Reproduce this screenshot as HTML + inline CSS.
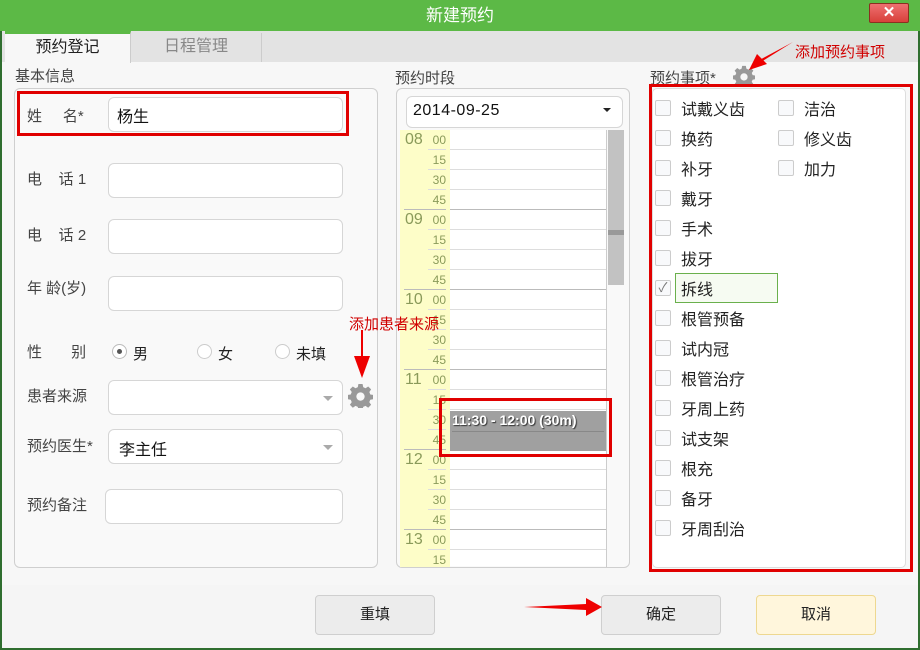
<!DOCTYPE html>
<html><head><meta charset="utf-8"><style>
*{margin:0;padding:0;box-sizing:border-box}
body{width:920px;height:650px;overflow:hidden;font-family:"Liberation Sans","Noto Sans CJK SC",sans-serif;font-size:15px;color:#333;background:#2f6e2f;position:relative}
.a{position:absolute}
.win{left:2px;top:0;width:916px;height:648px;background:#f7f7f7}
.title{left:0;top:0;width:920px;height:31px;background:#5cb946;color:#fff;font-size:17px;text-align:center;line-height:31px}
.inp{background:#fff;border:1px solid #d6d6d6;border-radius:6px}
.lbl{font-size:15px;color:#444;white-space:nowrap}
.panel{border:1px solid #cfcfcf;border-radius:6px;background:#f9f9f9}
.red{border:3px solid #e00000}
.cb{width:16px;height:16px;border:1px solid #ccc;border-radius:2px;background:#f8f9fb;margin-right:10px;text-align:center;line-height:14px;font-size:13px;color:#777}
.it{display:flex;align-items:center;height:30px}
.btn{border:1px solid #cfcfcf;border-radius:4px;background:#ececec;text-align:center;line-height:38px;font-size:15px;color:#222}
.row{left:450px;width:156px;height:20px;border-bottom:1px solid #ddd;background:#fff}
.mn{left:428px;width:18px;height:20px;border-bottom:1px solid #ddd;font-size:12px;color:#8a9a5a;text-align:right;line-height:20px}
.hr{left:405px;font-size:16px;color:#8a9a5a}
.ann{color:#d00000;font-size:15px;white-space:nowrap}
</style></head><body>
<div class="a win"></div>
<div class="a title">新建预约</div>
<div class="a" style="left:869px;top:3px;width:40px;height:20px;background:linear-gradient(#ee7070,#d8403a);border:1px solid #8a3020;border-radius:2px;color:#fff;font-weight:bold;text-align:center;line-height:18px;font-size:15px">✕</div>
<div class="a" style="left:2px;top:31px;width:916px;height:31px;background:#e3e3e3"></div>
<div class="a" style="left:5px;top:31px;width:126px;height:32px;background:#f7f7f7;border-top:3px solid #5cb946;border-right:1px solid #ccc;font-size:16px;text-align:center;line-height:28px;color:#222">预约登记</div>
<div class="a" style="left:131px;top:33px;width:131px;height:29px;border-right:1px solid #ccc;font-size:16px;text-align:center;line-height:28px;color:#888">日程管理</div>
<div class="a lbl" style="left:15px;top:65px">基本信息</div>
<div class="a panel" style="left:14px;top:88px;width:364px;height:480px"></div>
<div class="a red" style="left:17px;top:91px;width:332px;height:45px"></div>
<div class="a lbl" style="left:27px;top:105px">姓&nbsp;&nbsp;&nbsp;&nbsp;&nbsp;名*</div>
<div class="a inp" style="left:108px;top:97px;width:235px;height:35px;padding:5px 8px;font-size:16px;color:#111">杨生</div>
<div class="a lbl" style="left:27px;top:168px">电&nbsp;&nbsp;&nbsp;&nbsp;话 1</div>
<div class="a inp" style="left:108px;top:163px;width:235px;height:35px"></div>
<div class="a lbl" style="left:27px;top:224px">电&nbsp;&nbsp;&nbsp;&nbsp;话 2</div>
<div class="a inp" style="left:108px;top:219px;width:235px;height:35px"></div>
<div class="a lbl" style="left:27px;top:277px">年 龄(岁)</div>
<div class="a inp" style="left:108px;top:276px;width:235px;height:35px"></div>
<div class="a lbl" style="left:27px;top:341px">性&nbsp;&nbsp;&nbsp;&nbsp;&nbsp;&nbsp;&nbsp;别</div>
<div class="a" style="left:112px;top:344px;width:15px;height:15px;border:1px solid #bbb;border-radius:50%;background:#fff"><div style="margin:4px;width:5px;height:5px;border-radius:50%;background:#555"></div></div>
<div class="a lbl" style="left:133px;top:343px;color:#222">男</div>
<div class="a" style="left:197px;top:344px;width:15px;height:15px;border:1px solid #ccc;border-radius:50%;background:#fff"></div>
<div class="a lbl" style="left:218px;top:343px;color:#222">女</div>
<div class="a" style="left:275px;top:344px;width:15px;height:15px;border:1px solid #ccc;border-radius:50%;background:#fff"></div>
<div class="a lbl" style="left:296px;top:343px;color:#222">未填</div>
<div class="a lbl" style="left:27px;top:385px">患者来源</div>
<div class="a inp" style="left:108px;top:380px;width:235px;height:35px"></div>
<div class="a" style="left:323px;top:396px;border:5px solid transparent;border-top:5px solid #aaa"></div>
<svg class="a" style="left:348px;top:383px" width="25" height="25" viewBox="0 0 24 24"><path fill="#999" d="M10 1h4l.6 3 2.2 1 2.6-1.7 2.8 2.8L20.5 8.7l.9 2.3 3 .5v4l-3 .6-1 2.2 1.8 2.6-2.8 2.8-2.6-1.8-2.2 1-.6 3h-4l-.6-3-2.2-1-2.6 1.8-2.8-2.8 1.8-2.6-1-2.2-3-.6v-4l3-.5 1-2.3L1.800 6.100 4.600 3.300 7.200 5 9.400 4z"/><circle cx="12" cy="13" r="4" fill="#f9f9f9"/></svg>
<div class="a lbl" style="left:27px;top:435px">预约医生*</div>
<div class="a inp" style="left:108px;top:429px;width:235px;height:35px;padding:6px 10px;font-size:16px;color:#111">李主任</div>
<div class="a" style="left:323px;top:445px;border:5px solid transparent;border-top:5px solid #aaa"></div>
<div class="a lbl" style="left:27px;top:494px">预约备注</div>
<div class="a inp" style="left:105px;top:489px;width:238px;height:35px"></div>
<div class="a ann" style="left:349px;top:313px;z-index:5">添加患者来源</div>
<svg class="a" style="left:350px;top:330px" width="24" height="50"><path d="M11 0h2v28h-2z" fill="#e00"/><path d="M4 26h16l-8 22z" fill="#e00"/></svg>
<div class="a lbl" style="left:395px;top:67px">预约时段</div>
<div class="a panel" style="left:396px;top:88px;width:234px;height:480px"></div>
<div class="a inp" style="left:406px;top:96px;width:217px;height:32px;padding:5px 6px;font-size:16px;color:#111;letter-spacing:0.5px">2014-09-25</div>
<div class="a" style="left:603px;top:108px;border:4px solid transparent;border-top:4px solid #222"></div>
<div class="a" style="left:400px;top:130px;width:50px;height:437px;background:#fdfdc8"></div>
<div class="a" style="left:606px;top:130px;width:1px;height:437px;background:#ccc"></div>
<div class="a" style="left:608px;top:130px;width:16px;height:155px;background:#c2c2c2"></div>
<div class="a" style="left:608px;top:230px;width:16px;height:5px;background:#999"></div>
<div class="a row" style="top:130px"></div><div class="a mn" style="top:130px">00</div><div class="a hr" style="top:131px">08</div>
<div class="a row" style="top:150px"></div><div class="a mn" style="top:150px">15</div>
<div class="a row" style="top:170px"></div><div class="a mn" style="top:170px">30</div>
<div class="a row" style="top:190px;border-color:#bbb"></div><div class="a mn" style="top:190px;left:404px;width:42px;border-color:#bbb">45</div>
<div class="a row" style="top:210px"></div><div class="a mn" style="top:210px">00</div><div class="a hr" style="top:211px">09</div>
<div class="a row" style="top:230px"></div><div class="a mn" style="top:230px">15</div>
<div class="a row" style="top:250px"></div><div class="a mn" style="top:250px">30</div>
<div class="a row" style="top:270px;border-color:#bbb"></div><div class="a mn" style="top:270px;left:404px;width:42px;border-color:#bbb">45</div>
<div class="a row" style="top:290px"></div><div class="a mn" style="top:290px">00</div><div class="a hr" style="top:291px">10</div>
<div class="a row" style="top:310px"></div><div class="a mn" style="top:310px">15</div>
<div class="a row" style="top:330px"></div><div class="a mn" style="top:330px">30</div>
<div class="a row" style="top:350px;border-color:#bbb"></div><div class="a mn" style="top:350px;left:404px;width:42px;border-color:#bbb">45</div>
<div class="a row" style="top:370px"></div><div class="a mn" style="top:370px">00</div><div class="a hr" style="top:371px">11</div>
<div class="a row" style="top:390px"></div><div class="a mn" style="top:390px">15</div>
<div class="a row" style="top:410px"></div><div class="a mn" style="top:410px">30</div>
<div class="a row" style="top:430px;border-color:#bbb"></div><div class="a mn" style="top:430px;left:404px;width:42px;border-color:#bbb">45</div>
<div class="a row" style="top:450px"></div><div class="a mn" style="top:450px">00</div><div class="a hr" style="top:451px">12</div>
<div class="a row" style="top:470px"></div><div class="a mn" style="top:470px">15</div>
<div class="a row" style="top:490px"></div><div class="a mn" style="top:490px">30</div>
<div class="a row" style="top:510px;border-color:#bbb"></div><div class="a mn" style="top:510px;left:404px;width:42px;border-color:#bbb">45</div>
<div class="a row" style="top:530px"></div><div class="a mn" style="top:530px">00</div><div class="a hr" style="top:531px">13</div>
<div class="a row" style="top:550px;height:16px;border:none"></div><div class="a mn" style="top:550px;height:16px;border:none;overflow:hidden">15</div>
<div class="a" style="left:450px;top:411px;width:156px;height:40px;background:#a0a0a0;color:#fff;font-weight:bold;font-size:14px;padding:1px 2px;text-shadow:1px 1px 1px #333"><div style="border-bottom:1px solid #888;height:20px">11:30 - 12:00 (30m)</div></div>
<div class="a red" style="left:439px;top:398px;width:173px;height:59px"></div>
<div class="a lbl" style="left:650px;top:67px">预约事项*</div>
<svg class="a" style="left:733px;top:65px" width="22" height="22" viewBox="0 0 24 24"><path fill="#999" d="M10 1h4l.6 3 2.2 1 2.6-1.7 2.8 2.8L20.5 8.7l.9 2.3 3 .5v4l-3 .6-1 2.2 1.8 2.6-2.8 2.8-2.6-1.8-2.2 1-.6 3h-4l-.6-3-2.2-1-2.6 1.8-2.8-2.8 1.8-2.6-1-2.2-3-.6v-4l3-.5 1-2.3L1.800 6.100 4.600 3.300 7.200 5 9.400 4z"/><circle cx="12" cy="13" r="4" fill="#f7f7f7"/></svg>
<div class="a ann" style="left:795px;top:41px">添加预约事项</div>
<svg class="a" style="left:745px;top:38px" width="50" height="36"><path d="M48 4L16 24l-1.5-2z" fill="#e00"/><path d="M4 32l8-16 10 10z" fill="#e00"/></svg>
<div class="a" style="left:652px;top:88px;width:254px;height:480px;background:#fff;border:1px solid #ddd;border-radius:5px"></div>
<div class="a red" style="left:649px;top:84px;width:264px;height:488px"></div>
<div class="a" style="left:675px;top:273px;width:103px;height:30px;border:1px solid #6ab04c;background:#f6fbf2"></div>
<div class="a" style="left:655px;top:93px;font-size:16px;color:#222">
<div class="it"><span class="cb"></span>试戴义齿</div>
<div class="it"><span class="cb"></span>换药</div>
<div class="it"><span class="cb"></span>补牙</div>
<div class="it"><span class="cb"></span>戴牙</div>
<div class="it"><span class="cb"></span>手术</div>
<div class="it"><span class="cb"></span>拔牙</div>
<div class="it"><span class="cb">✓</span>拆线</div>
<div class="it"><span class="cb"></span>根管预备</div>
<div class="it"><span class="cb"></span>试内冠</div>
<div class="it"><span class="cb"></span>根管治疗</div>
<div class="it"><span class="cb"></span>牙周上药</div>
<div class="it"><span class="cb"></span>试支架</div>
<div class="it"><span class="cb"></span>根充</div>
<div class="it"><span class="cb"></span>备牙</div>
<div class="it"><span class="cb"></span>牙周刮治</div>
</div>
<div class="a" style="left:778px;top:93px;font-size:16px;color:#222">
<div class="it"><span class="cb"></span>洁治</div>
<div class="it"><span class="cb"></span>修义齿</div>
<div class="it"><span class="cb"></span>加力</div>
</div>
<div class="a" style="left:2px;top:585px;width:916px;height:63px;background:#f5f5f5"></div>
<div class="a btn" style="left:315px;top:595px;width:120px;height:40px">重填</div>
<div class="a btn" style="left:601px;top:595px;width:120px;height:40px">确定</div>
<div class="a btn" style="left:756px;top:595px;width:120px;height:40px;background:#fff6dc;border-color:#eed890">取消</div>
<svg class="a" style="left:524px;top:598px" width="78" height="20"><path d="M0 9l62-3v-6l16 9-16 9v-6z" fill="#e00"/></svg>
</body></html>
